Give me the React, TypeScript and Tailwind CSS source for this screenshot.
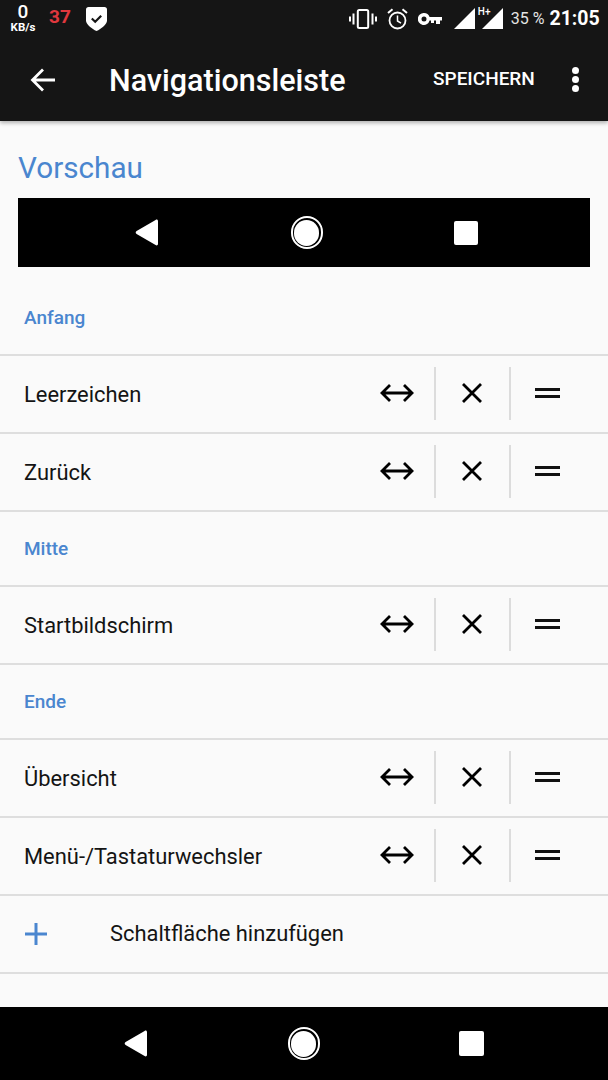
const font = "font-['Roboto',sans-serif]"

const BackTriangle = () => (
  <svg className="w-[24px] h-[27px]" viewBox="0 0 24 27" fill="#fff">
    <path d="M23 2.200v22.600c0 1.400-1.200 2-2.400 1.300L1.600 15c-1.200-.7-1.200-2.300 0-3L20.600.9C21.800.2 23 .8 23 2.200z" />
  </svg>
)

const NavBar = ({ wide }: { wide?: boolean }) => (
  <>
    <BackTriangle />
    <div className="w-[32px] h-[33px] rounded-full border-2 border-white flex items-center justify-center">
      <div className="w-[25px] h-[26px] rounded-full bg-white" />
    </div>
    <div className={wide ? 'w-[25px] h-[25px] rounded-[2px] bg-white' : 'w-[24px] h-[24px] rounded-[2px] bg-white'} />
  </>
)

const StatusBar = () => (
  <div className="h-[38px] flex items-start text-white">
    <div className="w-[46px] pt-[3px] flex flex-col items-center">
      <span className="text-[19px] leading-[18px] font-medium">0</span>
      <span className="mt-[2px] text-[11.500px] leading-[9px] font-bold">KB/s</span>
    </div>
    <span className="ml-[3px] mt-[7px] text-[19px] leading-[20px] font-bold text-[#e0383e]">37</span>
    <svg className="ml-[15px] mt-[7px] w-[21px] h-[24px]" viewBox="0 0 21 24">
      <path d="M2.500 0h16C20 0 21 1 21 2.500v11c0 4-6 8.500-10.500 10.500C6 22 0 17.500 0 13.500v-11C0 1 1 0 2.500 0z" fill="#fff" />
      <path d="M5.800 11.500l3.400 3.300 6-6" stroke="#151515" strokeWidth="2.200" fill="none" />
    </svg>
    <svg className="ml-[242px] mt-[9px] w-[28px] h-[20px]" viewBox="0 0 28 20" fill="none" stroke="#fff">
      <rect x="8.800" y="1" width="10.400" height="18" rx="1.500" strokeWidth="2" />
      <path d="M4.500 4.500v11M23.500 4.500v11" strokeWidth="2" />
      <path d="M1 7.500v5M27 7.500v5" strokeWidth="2" />
    </svg>
    <svg className="ml-[10px] mt-[8px] w-[21px] h-[22px]" viewBox="0 0 21 22" fill="none" stroke="#fff">
      <circle cx="10.500" cy="12.500" r="8" strokeWidth="1.800" />
      <path d="M10.500 7.500v5.500l3.500 2.200" strokeWidth="1.500" />
      <path d="M1 5l4.500-3.700M20 5l-4.500-3.700" strokeWidth="2" />
    </svg>
    <svg className="ml-[10px] mt-[13px] w-[24px] h-[12px]" viewBox="0 0 24 12" fill="#fff">
      <path fillRule="evenodd" d="M6 0a6 6 0 0 1 5.600 4H24v3.500h-2V11h-4V7.500h-2V10h-3V7.500h-1.400A6 6 0 1 1 6 0zm0 3.500a2.500 2.500 0 1 0 0 5 2.500 2.500 0 0 0 0-5z" />
    </svg>
    <svg className="ml-[12px] mt-[8px] w-[21px] h-[21px]" viewBox="0 0 21 21" fill="#fff">
      <path d="M21 0v21H0z" />
    </svg>
    <div className="relative ml-[7px] mt-[8px] w-[21px] h-[21px]">
      <svg className="w-[21px] h-[21px]" viewBox="0 0 21 21" fill="#fff">
        <path d="M21 0v21H0z" />
      </svg>
      <span className="absolute -left-[4px] -top-[1px] text-[10px] leading-[10px] font-medium">H+</span>
    </div>
    <span className="ml-[8px] mt-[9px] text-[16px] leading-[20px] text-[#e4e4e4] whitespace-nowrap">35 %</span>
    <span className="ml-[5px] mt-[7px] text-[19.500px] leading-[24px] font-bold whitespace-nowrap">21:05</span>
  </div>
)

const AppBar = () => (
  <div className="h-[83px] flex items-start text-white">
    <svg className="ml-[29px] mt-[29px] w-[28px] h-[26px]" viewBox="0 0 28 26" fill="none" stroke="#fff" strokeWidth="2.800">
      <path d="M26 13H4M14 2.500L3.500 13 14 23.500" />
    </svg>
    <span className="ml-[52px] mt-[24px] w-[324px] text-[30.500px] leading-[38px] font-medium whitespace-nowrap">Navigationsleiste</span>
    <span className="mt-[29px] w-[139px] text-[19px] leading-[24px] font-medium whitespace-nowrap">SPEICHERN</span>
    <div className="mt-[29px] flex flex-col gap-[2px]">
      <div className="w-[7px] h-[7px] rounded-full bg-white" />
      <div className="w-[7px] h-[7px] rounded-full bg-white" />
      <div className="w-[7px] h-[7px] rounded-full bg-white" />
    </div>
  </div>
)

const RowActions = () => (
  <div className="flex items-center h-[53px] mb-[2px] pr-[48px]">
    <svg className="w-[34px] h-[20px]" viewBox="0 0 34 20" fill="none" stroke="#000" strokeWidth="2.800">
      <path d="M2 10h30M10 2l-8 8 8 8M24 2l8 8-8 8" />
    </svg>
    <div className="ml-[20px] w-[2px] h-[53px] bg-[#dcdcdc]" />
    <svg className="ml-[25px] w-[22px] h-[22px]" viewBox="0 0 22 22" fill="none" stroke="#000" strokeWidth="2.800">
      <path d="M2 2l18 18M20 2L2 20" />
    </svg>
    <div className="ml-[26px] w-[2px] h-[53px] bg-[#dcdcdc]" />
    <div className="ml-[24px] w-[25px] flex flex-col gap-[4px]">
      <div className="h-[3px] bg-[#111]" />
      <div className="h-[3px] bg-[#111]" />
    </div>
  </div>
)

const Row = ({ label }: { label: string }) => (
  <div className="h-[78px] border-b-2 border-[#dedede] flex items-center justify-between pl-[24px]">
    <span className="mt-[2px] text-[21.900px] text-[#141414] whitespace-nowrap">{label}</span>
    <RowActions />
  </div>
)

const Section = ({ title, first }: { title: string; first?: boolean }) => (
  <div className={(first ? 'h-[89px] pt-[38px]' : 'h-[75px] pt-[24px]') + ' border-b-2 border-[#dedede] pl-[24px]'}>
    <span className="block text-[19px] leading-[26px] font-medium text-[#4a86cf]">{title}</span>
  </div>
)

export default function App() {
  return (
    <div className={`${font} w-[608px] h-[1080px] flex flex-col bg-[#fafafa] overflow-hidden`}>
      <div className="bg-[#151515] shadow-[0_2px_4px_rgba(0,0,0,0.3)] h-[121px] shrink-0">
        <StatusBar />
        <AppBar />
      </div>
      <div className="flex-1">
        <div className="px-[18px] pt-[28px]">
          <div className="text-[29.700px] leading-[38px] text-[#4a86cf] mb-[11px]">Vorschau</div>
          <div className="h-[69px] bg-black flex items-center justify-between pl-[117px] pr-[112px]">
            <NavBar />
          </div>
        </div>
        <Section title="Anfang" first />
        <Row label="Leerzeichen" />
        <Row label="Zurück" />
        <Section title="Mitte" />
        <Row label="Startbildschirm" />
        <Section title="Ende" />
        <Row label="Übersicht" />
        <Row label="Menü-/Tastaturwechsler" />
        <div className="h-[78px] border-b-2 border-[#dedede] flex items-center pl-[25px]">
          <svg className="w-[22px] h-[22px]" viewBox="0 0 22 22" fill="none" stroke="#4a86cf" strokeWidth="3">
            <path d="M11 0v22M0 11h22" />
          </svg>
          <span className="ml-[63px] text-[21.900px] text-[#141414] whitespace-nowrap">Schaltfläche hinzufügen</span>
        </div>
      </div>
      <div className="h-[73px] shrink-0 bg-black flex items-center justify-between pl-[124px] pr-[124px]">
        <NavBar wide />
      </div>
    </div>
  )
}
